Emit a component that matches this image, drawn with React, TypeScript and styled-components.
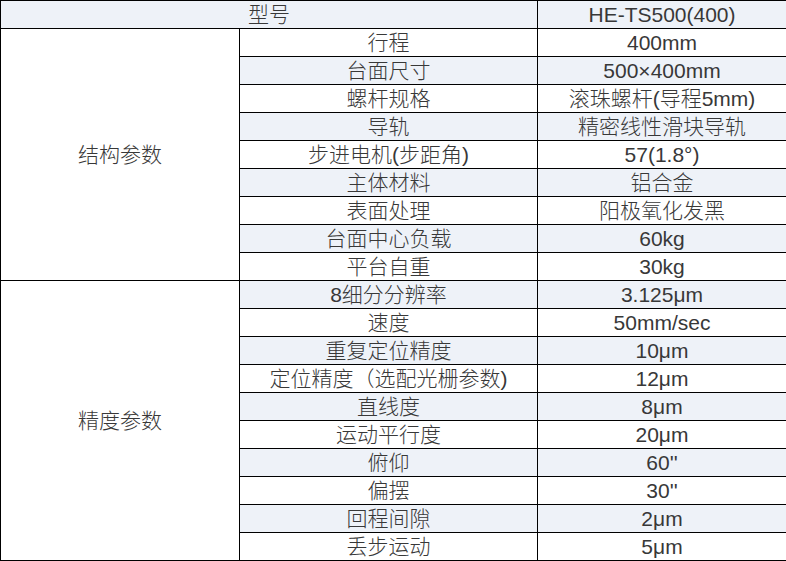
import * as React from "react";
import styled, { createGlobalStyle } from "styled-components";

const GlobalStyle = createGlobalStyle`
  html, body {
    margin: 0;
    padding: 0;
    background: #ffffff;
  }
`;

const Table = styled.table`
  width: 786px;
  border-collapse: collapse;
  table-layout: fixed;
  font-family: "Liberation Sans", "Noto Sans CJK SC", sans-serif;
  font-size: 21px;
  font-weight: 300;
  color: #383838;
`;

const Col = styled.col<{ $w: number }>`
  width: ${(p) => p.$w}px;
`;

const Row = styled.tr<{ $shade: boolean }>`
  height: 28px;
  background: ${(p) => (p.$shade ? "#eef2f8" : "#ffffff")};
`;

const Cell = styled.td`
  border: 1px solid #000000;
  padding: 0;
  height: 27px;
  line-height: 27px;
  text-align: center;
  vertical-align: middle;
  white-space: nowrap;
  overflow: hidden;
`;

const GroupCell = styled(Cell)`
  background: #ffffff;
`;

interface IGroup {
  title: string;
  items: [string, string][];
}

const groups: IGroup[] = [
  {
    title: "结构参数",
    items: [
      ["行程", "400mm"],
      ["台面尺寸", "500×400mm"],
      ["螺杆规格", "滚珠螺杆(导程5mm)"],
      ["导轨", "精密线性滑块导轨"],
      ["步进电机(步距角)", "57(1.8°)"],
      ["主体材料", "铝合金"],
      ["表面处理", "阳极氧化发黑"],
      ["台面中心负载", "60kg"],
      ["平台自重", "30kg"],
    ],
  },
  {
    title: "精度参数",
    items: [
      ["8细分分辨率", "3.125μm"],
      ["速度", "50mm/sec"],
      ["重复定位精度", "10μm"],
      ["定位精度（选配光栅参数)", "12μm"],
      ["直线度", "8μm"],
      ["运动平行度", "20μm"],
      ["俯仰", "60''"],
      ["偏摆", "30''"],
      ["回程间隙", "2μm"],
      ["丢步运动", "5μm"],
    ],
  },
];

export default function App() {
  let index = 0;
  return (
    <>
      <GlobalStyle />
      <Table>
        <colgroup>
          <Col $w={239} />
          <Col $w={298} />
          <Col $w={249} />
        </colgroup>
        <tbody>
          <Row $shade={true}>
            <Cell colSpan={2}>型号</Cell>
            <Cell>HE-TS500(400)</Cell>
          </Row>
          {groups.map((group) =>
            group.items.map(([name, value], i) => {
              index += 1;
              return (
                <Row key={name} $shade={index % 2 === 0}>
                  {i === 0 && (
                    <GroupCell rowSpan={group.items.length}>{group.title}</GroupCell>
                  )}
                  <Cell>{name}</Cell>
                  <Cell>{value}</Cell>
                </Row>
              );
            })
          )}
        </tbody>
      </Table>
    </>
  );
}
